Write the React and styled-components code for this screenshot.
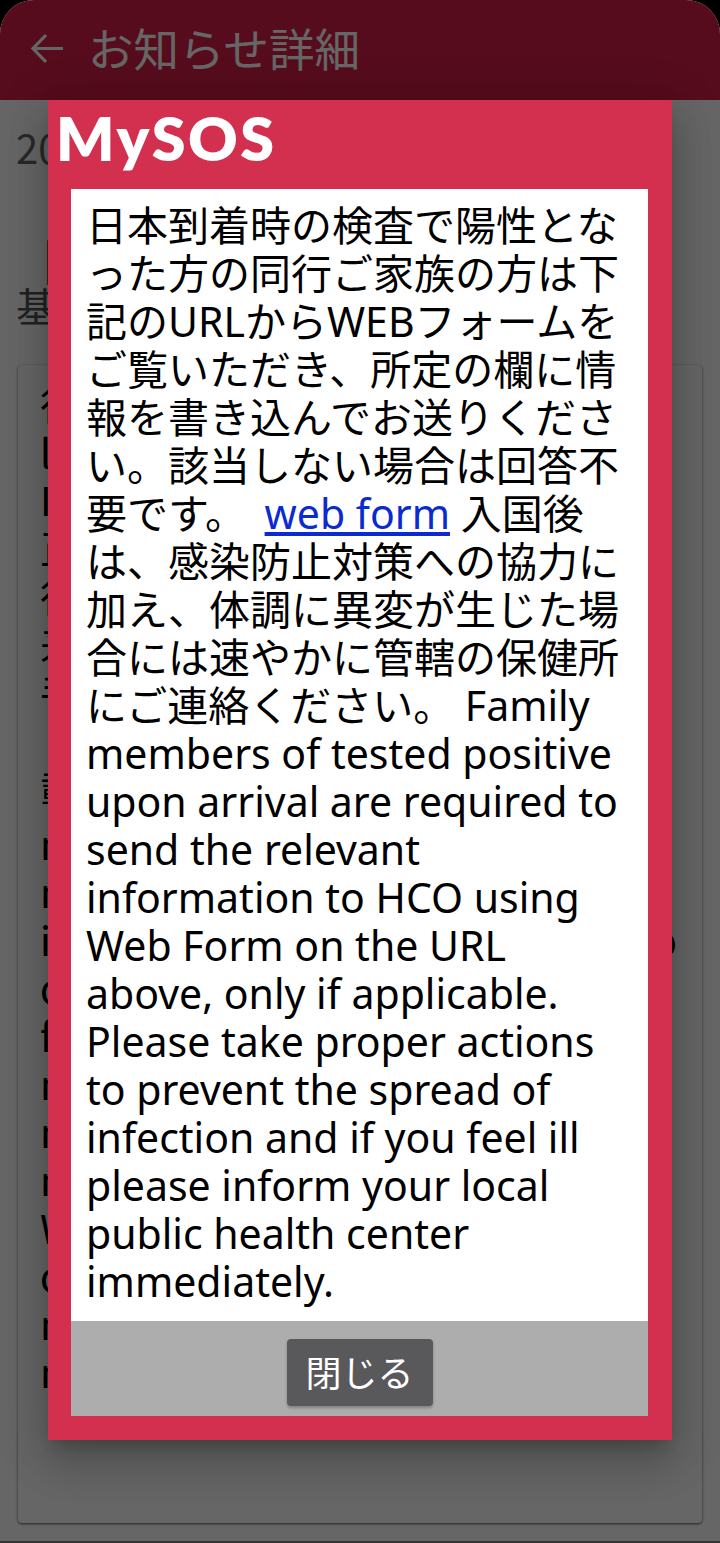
import React from "react";
import styled, { createGlobalStyle } from "styled-components";

const GlobalStyle = createGlobalStyle`
  html, body {
    margin: 0;
    padding: 0;
    background: #000;
  }
  body {
    font-family: "Noto Sans", "Noto Sans CJK JP", sans-serif;
  }
`;

const Screen = styled.div`
  position: relative;
  width: 720px;
  height: 1543px;
  box-sizing: border-box;
  overflow: hidden;
  background: #fff;
  border-radius: 34px 34px 0 0;
  border-bottom: 2px solid #333;
  display: flex;
  flex-direction: column;
`;

const Toolbar = styled.header`
  height: 100px;
  flex-shrink: 0;
  display: flex;
  align-items: center;
  gap: 25px;
  padding: 0 0 4px 30px;
  box-sizing: border-box;
  background: #d6204a;
  color: #fff;
`;

const BackIcon = styled.svg`
  width: 33px;
  height: 33px;
  display: block;
`;

const ToolbarTitle = styled.h1`
  margin: 0;
  font-size: 45.5px;
  font-weight: 400;
  line-height: 1;
  font-family: "Noto Sans CJK JP", sans-serif;
`;

const Content = styled.main`
  flex: 1;
  display: flex;
  flex-direction: column;
  padding: 23px 18px 18px 16px;
  color: #000;
  font-family: "Noto Sans CJK JP", sans-serif;
`;

const DateText = styled.div`
  font-size: 40px;
  line-height: 48px;
  color: #666;
`;

const Heading = styled.div`
  margin-top: 62px;
  font-size: 40px;
  line-height: 48px;
  color: #555;
  white-space: nowrap;
`;

const HeadingLine = styled.div`
  padding-left: ${(p) => p.$indent || 0}px;
`;

const Card = styled.section`
  flex: 1;
  margin: 36px 0 0 2px;
  padding: 14px 25px 14px 22px;
  background: #fff;
  border-radius: 4px;
  box-shadow: 0 1px 3px rgba(0, 0, 0, 0.45), 0 1px 2px rgba(0, 0, 0, 0.3);
  font-size: 40px;
  line-height: 48px;
`;

const CardLine = styled.div`
  display: flex;
  justify-content: space-between;
  white-space: nowrap;
  overflow: hidden;
  margin-top: ${(p) => p.$gap || 0}px;
`;

const Scrim = styled.div`
  position: absolute;
  inset: 0;
  background: rgba(0, 0, 0, 0.6);
  padding: 100px 48px 103px;
  display: flex;
  align-items: flex-start;
`;

const Dialog = styled.div`
  flex: 1;
  height: 1340px;
  box-sizing: border-box;
  display: flex;
  flex-direction: column;
  padding: 0 24px 24px 23px;
  background: #d32f4f;
  box-shadow: 0 11px 15px -7px rgba(0, 0, 0, 0.2),
    0 24px 38px 3px rgba(0, 0, 0, 0.14), 0 9px 46px 8px rgba(0, 0, 0, 0.12);
`;

const Logo = styled.div`
  height: 89px;
  flex-shrink: 0;
  margin-left: -15px;
  color: #fff;
  font-family: "Lato", sans-serif;
  font-size: 61px;
  font-weight: 800;
  letter-spacing: 2.5px;
  line-height: 76px;
`;

const Message = styled.div`
  flex: 1;
  padding: 12px 15px;
  background: #fff;
  color: #000;
  font-size: 41px;
  line-height: 48px;
  font-family: "Noto Sans", "Noto Sans CJK JP", sans-serif;
  overflow: hidden;
`;

const FormLink = styled.a`
  margin-left: 8px;
  color: #0b2bd0;
  text-decoration: underline;
`;

const Actions = styled.div`
  height: 95px;
  flex-shrink: 0;
  display: flex;
  justify-content: center;
  align-items: flex-start;
  padding-top: 18px;
  box-sizing: border-box;
  background: #adadad;
`;

const CloseButton = styled.button`
  width: 146px;
  height: 67px;
  padding: 0 0 4px;
  border: none;
  border-radius: 4px;
  background: #59595b;
  color: #fff;
  font-family: "Noto Sans CJK JP", sans-serif;
  font-size: 36px;
  box-shadow: 0 2px 3px rgba(0, 0, 0, 0.25);
`;

// only the edges of these rows show from under the dialog
const cardLines = [
  { parts: ["行"] },
  { parts: ["l"] },
  { parts: ["I"] },
  { parts: ["正"] },
  { parts: ["行"] },
  { parts: ["来"] },
  { parts: ["手"] },
  { parts: ["・"] },
  { parts: ["載"] },
  { parts: ["m"], gap: 8 },
  { parts: ["m"] },
  { parts: ["information", "to"] },
  { parts: ["c"] },
  { parts: ["f"] },
  { parts: ["m"] },
  { parts: ["m"] },
  { parts: ["m", "·"] },
  { parts: ["W"] },
  { parts: ["c"] },
  { parts: ["m"] },
  { parts: ["m"] },
];

export default function App() {
  return (
    <>
      <GlobalStyle />
      <Screen>
        <Toolbar>
          <BackIcon viewBox="0 0 33 33" fill="none" stroke="currentColor" strokeWidth="3.2">
            <path d="M33 16.5H3M16 3L3 16.5L16 30" />
          </BackIcon>
          <ToolbarTitle>お知らせ詳細</ToolbarTitle>
        </Toolbar>
        <Content>
          <DateText>2022/06/01</DateText>
          <Heading>
            <HeadingLine $indent={27}>|重要</HeadingLine>
            <HeadingLine>基本情報の確認</HeadingLine>
          </Heading>
          <Card>
            {cardLines.map((line, i) => (
              <CardLine key={i} $gap={line.gap}>
                {line.parts.map((part) => (
                  <span key={part}>{part}</span>
                ))}
              </CardLine>
            ))}
          </Card>
        </Content>
        <Scrim>
          <Dialog>
            <Logo>MySOS</Logo>
            <Message>
              日本到着時の検査で陽性となった方の同行ご家族の方は下記のURLからWEBフォームをご覧いただき、所定の欄に情報を書き込んでお送りください。該当しない場合は回答不要です。{" "}
              <FormLink href="#">web form</FormLink>{" "}
              入国後は、感染防止対策への協力に加え、体調に異変が生じた場合には速やかに管轄の保健所にご連絡ください。{" "}
              Family members of tested positive upon arrival are required to
              send the relevant information to HCO using Web Form on the URL
              above, only if applicable. Please take proper actions to prevent
              the spread of infection and if you feel ill please inform your
              local public health center immediately.
            </Message>
            <Actions>
              <CloseButton>閉じる</CloseButton>
            </Actions>
          </Dialog>
        </Scrim>
      </Screen>
    </>
  );
}
